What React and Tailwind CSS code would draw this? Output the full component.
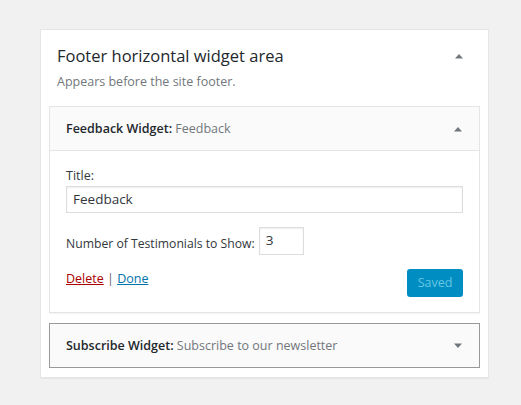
export default function App() {
  const font = { fontFamily: '"Open Sans", "Noto Sans", sans-serif' };
  const Up = () => (
    <svg width="10" height="6" viewBox="0 0 10 6" className="block">
      <path d="M1 5.5 L5 1 L9 5.5 Z" fill="#72777c" />
    </svg>
  );
  const Down = () => (
    <svg width="10" height="6" viewBox="0 0 10 6" className="block">
      <path d="M1 0.5 L5 5 L9 0.5 Z" fill="#72777c" />
    </svg>
  );
  return (
    <div className="w-[521px] h-[405px] bg-[#f1f1f1] pt-[29px] pl-[40px]" style={font}>
      <div className="w-[449px] h-[349px] bg-white border border-[#e5e5e5] shadow-[0_1px_1px_rgba(0,0,0,0.04)]">
        <div className="flex items-center justify-between pl-[16px] pr-[24px] pt-[13px] h-[39px]">
          <h2 className="text-[16.5px] text-[#23282d] font-normal leading-[24px]">Footer horizontal widget area</h2>
          <Up />
        </div>
        <p className="pl-[16px] text-[12.5px] text-[#72777c] leading-[20px] mt-[3px]">Appears before the site footer.</p>
        <div className="mx-[8px] mt-[14px] border border-[#e5e5e5] shadow-[0_1px_1px_rgba(0,0,0,0.04)]">
          <div className="h-[44px] bg-[#fafafa] flex items-center justify-between pl-[16px] pr-[16px] border-b border-[#e5e5e5]">
            <div className="text-[12.5px] leading-[20px]">
              <span className="font-semibold text-[#23282d]">Feedback Widget:</span>
              <span className="text-[#72777c]"> Feedback</span>
            </div>
            <Up />
          </div>
          <div className="px-[16px] pt-[16px] pb-[15px]">
            <div className="text-[12.5px] text-[#32373c] leading-[18px]">Title:</div>
            <div className="mt-[1px] h-[27px] border border-[#ddd] shadow-[inset_0_1px_2px_rgba(0,0,0,0.07)] flex items-center px-[6px] text-[13.5px] text-[#32373c]">Feedback</div>
            <div className="mt-[14px] flex items-center text-[12.2px] text-[#32373c]">
              <span className="leading-[18px] mt-[6px]">Number of Testimonials to Show:</span>
              <div className="ml-[4px] w-[45px] h-[28px] border border-[#ddd] shadow-[inset_0_1px_2px_rgba(0,0,0,0.07)] px-[6px] pt-[2px] text-[13.5px] text-[#32373c]">3</div>
            </div>
            <div className="mt-[14px] flex items-start justify-between">
              <div className="text-[12.5px] leading-[18px] pt-[1px]">
                <span className="text-[#a00] underline">Delete</span>
                <span className="text-[#666]"> | </span>
                <span className="text-[#0073aa] underline">Done</span>
              </div>
              <div className="w-[56px] h-[28px] rounded-[3px] bg-[#008ec2] text-[#66c6e4] text-[12.5px] flex items-center justify-center">Saved</div>
            </div>
          </div>
        </div>
        <div className="mx-[8px] mt-[10px] h-[45px] bg-[#fafafa] border border-[#999] flex items-center justify-between pl-[16px] pr-[16px]">
          <div className="text-[12.5px] leading-[20px]">
            <span className="font-semibold text-[#23282d]">Subscribe Widget:</span>
            <span className="text-[#72777c]"> Subscribe to our newsletter</span>
          </div>
          <Down />
        </div>
      </div>
    </div>
  );
}
